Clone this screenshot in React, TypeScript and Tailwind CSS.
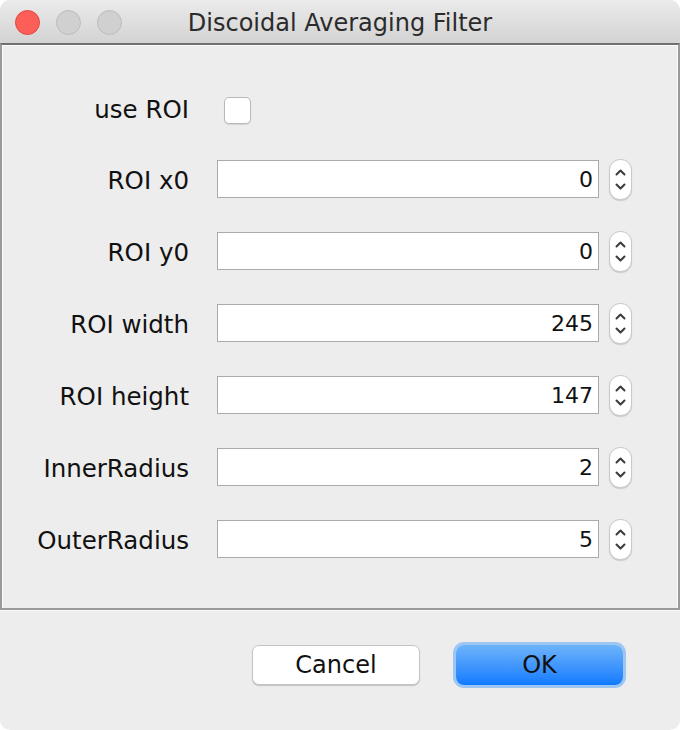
import React from "react";

const rows = [
  { label: "ROI x0", value: "0" },
  { label: "ROI y0", value: "0" },
  { label: "ROI width", value: "245" },
  { label: "ROI height", value: "147" },
  { label: "InnerRadius", value: "2" },
  { label: "OuterRadius", value: "5" },
];

const Spinner = () => (
  <div className="ml-[10px] flex h-[41px] w-[23px] flex-col items-center justify-center gap-[7px] rounded-[11px] border border-[#c9c9c9] bg-white shadow-[0_1px_1px_rgba(0,0,0,0.15)]">
    <svg width="11" height="7" viewBox="0 0 11 7" fill="none">
      <path d="M1.5 5.5 L5.5 1.5 L9.5 5.5" stroke="#3a3a3a" strokeWidth="2" strokeLinecap="round" strokeLinejoin="round" />
    </svg>
    <svg width="11" height="7" viewBox="0 0 11 7" fill="none">
      <path d="M1.5 1.5 L5.5 5.5 L9.5 1.5" stroke="#3a3a3a" strokeWidth="2" strokeLinecap="round" strokeLinejoin="round" />
    </svg>
  </div>
);

export default function App() {
  return (
    <div className="h-[730px] w-[680px] bg-white font-['DejaVu_Sans',sans-serif] text-[#111]">
      <div className="flex h-full flex-col overflow-hidden rounded-[10px] bg-[#ededed]">
        {/* Title bar */}
        <div className="relative flex h-[43px] shrink-0 items-center justify-center bg-gradient-to-b from-[#ebebeb] to-[#d3d3d3]">
          <div className="absolute left-[15px] top-[10px] flex gap-[16px]">
            <span className="h-[25px] w-[25px] rounded-full border border-[#e2463f] bg-[#fc5f57]" />
            <span className="h-[25px] w-[25px] rounded-full border border-[#bcbcbc] bg-[#d0d0d0]" />
            <span className="h-[25px] w-[25px] rounded-full border border-[#bcbcbc] bg-[#d0d0d0]" />
          </div>
          <span className="pt-[2px] text-[24px] text-[#2b2b2b]">Discoidal Averaging Filter</span>
        </div>

        {/* Form panel */}
        <div className="flex h-[567px] shrink-0 flex-col border-2 border-[#9a9a9a] border-t-[#707070] pb-[33px] pt-[29px] shadow-[inset_1px_1px_0_#fafafa,inset_-1px_0_0_#fafafa,0_1px_0_#fafafa]">
          <div className="flex h-[69px] items-center">
            <span className="w-[187px] pt-[4px] text-right text-[24.5px]">use ROI</span>
            <span className="ml-[35px] mt-[3px] h-[27px] w-[27px] rounded-[5px] border border-[#b8b8b8] bg-white shadow-[0_1px_1px_rgba(0,0,0,0.1)]" />
          </div>
          {rows.map((r) => (
            <div key={r.label} className="flex h-[72px] items-center">
              <span className="w-[187px] pt-[4px] text-right text-[24.5px]">{r.label}</span>
              <div className="ml-[28px] flex h-[38px] w-[382px] items-center justify-end border border-[#ababab] bg-white pr-[5px] text-[22px]">
                {r.value}
              </div>
              <Spinner />
            </div>
          ))}
        </div>

        {/* Buttons */}
        <div className="flex flex-1 items-start justify-end gap-[36px] pr-[57px] pt-[35px]">
          <button className="flex h-[40px] w-[168px] items-center justify-center rounded-[7px] border border-[#c4c4c4] bg-white text-[24px] shadow-[0_1px_1px_rgba(0,0,0,0.18)]">
            Cancel
          </button>
          <button className="flex h-[40px] w-[167px] items-center justify-center rounded-[8px] bg-gradient-to-b from-[#6cb3fa] to-[#0b7aff] text-[24px] ring-[3px] ring-[#9ec6f2]">
            OK
          </button>
        </div>
      </div>
    </div>
  );
}
